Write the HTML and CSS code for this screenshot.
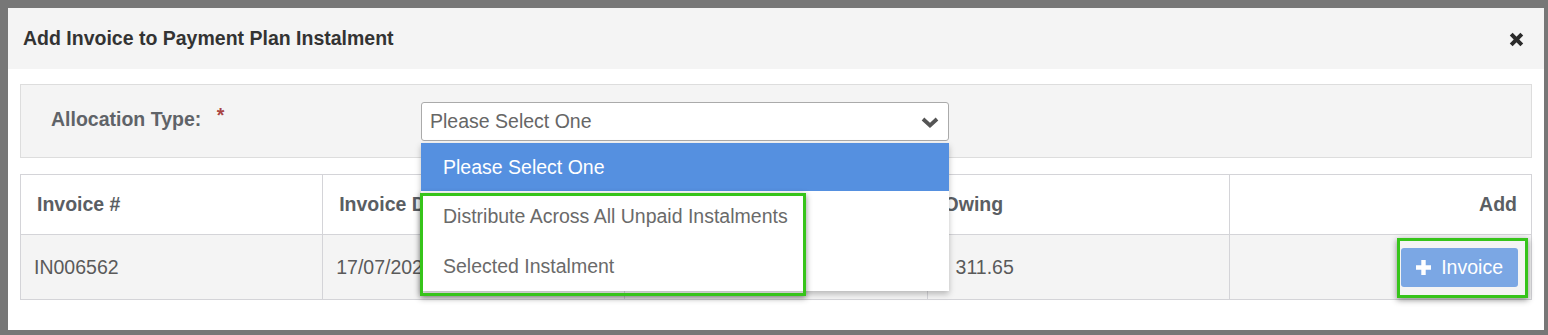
FILE: index.html
```
<html>
    <head>
        <title>Add Invoice to Payment Plan Instalment</title>
        <link rel="stylesheet" href="styles.css">
    </head>
    <body>
        <div class="modal">
            <div class="modal-header">
                <h4 class="modal-title">Add Invoice to Payment Plan Instalment</h4>
                <span class="close-icon">
                    <svg width="15" height="15" viewBox="0 0 15 15">
                        <path d="M2.2 2.2 L12.8 12.8 M12.8 2.2 L2.2 12.8" stroke="#2b2b2b" stroke-width="4" fill="none"/>
                    </svg>
                </span>
            </div>

            <div class="modal-body">
                <div class="form-panel">
                    <label class="form-label">Allocation Type: <span class="required">*</span></label>
                    <div class="select-wrap">
                        <div class="select-box">
                            <span>Please Select One</span>
                            <svg width="20" height="14" viewBox="0 0 20 14">
                                <polyline points="3,4 10,10.5 17,4" stroke="#555" stroke-width="3.8" fill="none"/>
                            </svg>
                        </div>
                        <ul class="select-options">
                            <li class="active">Please Select One</li>
                            <li>Distribute Across All Unpaid Instalments</li>
                            <li>Selected Instalment</li>
                            <div class="highlight options-highlight"></div>
                        </ul>
                    </div>
                </div>

                <table class="invoice-table">
                    <thead>
                        <tr>
                            <th>Invoice #</th>
                            <th>Invoice Date</th>
                            <th></th>
                            <th>Owing</th>
                            <th class="right">Add</th>
                        </tr>
                    </thead>
                    <tbody>
                        <tr>
                            <td>IN006562</td>
                            <td>17/07/2023</td>
                            <td></td>
                            <td class="owing">311.65</td>
                            <td class="right btn-cell">
                                <span class="highlight btn-highlight">
                                    <button class="btn-add">
                                        <svg width="17" height="17" viewBox="0 0 17 17">
                                            <path d="M8.5 1 V16 M1 8.5 H16" stroke="#fff" stroke-width="4.4" fill="none"/>
                                        </svg>
                                        Invoice
                                    </button>
                                </span>
                            </td>
                        </tr>
                    </tbody>
                </table>
            </div>
        </div>
    </body>
</html>
```

FILE: styles.css
```
* {
    font-family: 'Liberation Sans', Arial, sans-serif;
    box-sizing: border-box;
}

body {
    margin: 0;
    padding: 8px 4px 5px 8px;
    background-color: #777;
}

.modal {
    width: 1536px;
    height: 322px;
    background-color: #fff;
}

.modal-header {
    display: flex;
    align-items: center;
    justify-content: space-between;
    height: 61px;
    padding: 0 20px 0 15px;
    background-color: #f4f4f4;
}

.modal-title {
    margin: 0;
    font-size: 19.5px;
    font-weight: bold;
    color: #333;
}

.close-icon {
    display: flex;
    margin-top: 2px;
}

.modal-body {
    padding: 15px 12px;
}

.form-panel {
    display: flex;
    align-items: flex-start;
    height: 74px;
    padding: 17px 0 0 30px;
    background-color: #f4f4f4;
    border: 1px solid #ddd;
}

.form-label {
    width: 370px;
    margin-top: 2px;
    font-size: 19.5px;
    font-weight: bold;
    color: #5f6368;
}

.required {
    margin-left: 10px;
    color: #a94442;
    vertical-align: 4px;
}

.select-wrap {
    position: relative;
}

.select-box {
    display: flex;
    align-items: center;
    justify-content: space-between;
    width: 528px;
    height: 39px;
    padding: 0 8px 0 8px;
    background-color: #fff;
    border: 1px solid #aaa;
    border-radius: 3px;
    font-size: 19.5px;
    color: #666;
}

.select-options {
    position: absolute;
    top: 41px;
    left: 0;
    width: 528px;
    margin: 0;
    padding: 0;
    list-style: none;
    background-color: #fff;
    box-shadow: 0 3px 6px rgba(0, 0, 0, 0.25);
    z-index: 5;
}

.select-options li {
    height: 50px;
    padding-left: 22px;
    line-height: 50px;
    font-size: 19.5px;
    color: #6a6a6a;
}

.select-options li.active {
    height: 48px;
    line-height: 48px;
    background-color: #5590e0;
    color: #fff;
}

.highlight {
    border: 3px solid #36c41a;
    box-shadow: 0 2px 6px rgba(0, 0, 0, 0.45);
}

.options-highlight {
    position: absolute;
    top: 50px;
    left: -1px;
    width: 386px;
    height: 103px;
}

.invoice-table {
    width: 100%;
    margin-top: 16px;
    border-collapse: collapse;
    table-layout: fixed;
    font-size: 19.5px;
    color: #5a5e63;
}

.invoice-table th,
.invoice-table td {
    border: 1px solid #d4d4d8;
    text-align: left;
}

.invoice-table th {
    height: 60px;
    padding: 0 14px 0 16px;
    font-weight: bold;
    background-color: #fff;
}

.invoice-table td {
    height: 65px;
    padding: 0 14px 0 13px;
    background-color: #f4f4f4;
    color: #5a5a5a;
}

.invoice-table td.owing {
    padding-left: 28px;
}

.invoice-table .right {
    text-align: right;
}

.invoice-table td.btn-cell {
    padding: 0 3px 0 0;
}

.btn-highlight {
    display: inline-block;
    padding: 7px 7px 8px 1px;
    margin-top: 1px;
}

.btn-add {
    display: flex;
    align-items: center;
    gap: 9px;
    height: 39px;
    padding: 0 15px 0 14px;
    background-color: #7ba7e4;
    border: none;
    border-radius: 3px;
    font-size: 19.5px;
    color: #fff;
}
```
